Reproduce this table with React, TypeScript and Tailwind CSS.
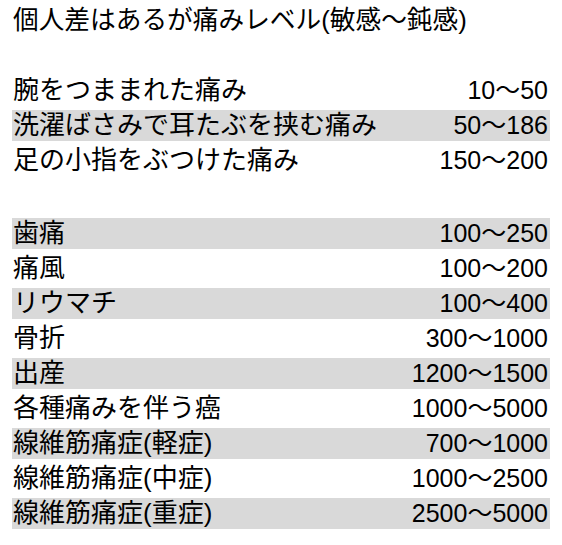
import React from "react";

type Row = { label: string; value: string; shaded?: boolean } | null;

const rows: Row[] = [
  { label: "腕をつままれた痛み", value: "10〜50" },
  { label: "洗濯ばさみで耳たぶを挟む痛み", value: "50〜186", shaded: true },
  { label: "足の小指をぶつけた痛み", value: "150〜200" },
  null,
  { label: "歯痛", value: "100〜250", shaded: true },
  { label: "痛風", value: "100〜200" },
  { label: "リウマチ", value: "100〜400", shaded: true },
  { label: "骨折", value: "300〜1000" },
  { label: "出産", value: "1200〜1500", shaded: true },
  { label: "各種痛みを伴う癌", value: "1000〜5000" },
  { label: "線維筋痛症(軽症)", value: "700〜1000", shaded: true },
  { label: "線維筋痛症(中症)", value: "1000〜2500" },
  { label: "線維筋痛症(重症)", value: "2500〜5000", shaded: true },
];

export default function App() {
  return (
    <div
      className="w-[562px] h-[545px] bg-white text-black pt-[5px] pl-[12px] overflow-hidden"
      style={{ fontFamily: '"Liberation Sans", "Noto Sans CJK JP", sans-serif' }}
    >
      <div className="w-[538px] flex flex-col gap-[4px] text-[26px] leading-[31px]">
        <div className="h-[31px] pl-[1px] whitespace-nowrap text-[25.7px]">個人差はあるが痛みレベル(敏感〜鈍感)</div>
        <div className="h-[31px]" />
        {rows.map((r, i) =>
          r === null ? (
            <div key={i} className="h-[34px]" />
          ) : (
            <div
              key={i}
              className={`h-[31px] flex justify-between items-center pl-[1px] pr-[2px] whitespace-nowrap ${
                r.shaded ? "bg-[#d9d9d9]" : ""
              }`}
            >
              <span>{r.label}</span>
              <span className="text-[25px]">{r.value}</span>
            </div>
          )
        )}
      </div>
    </div>
  );
}
